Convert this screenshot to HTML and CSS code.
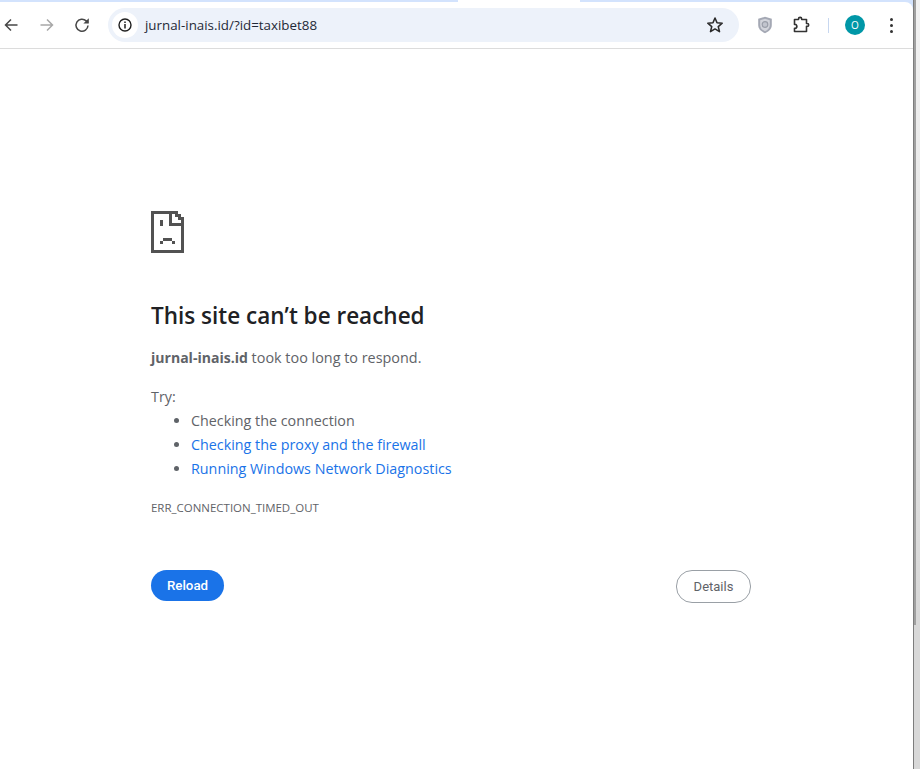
FILE: index.html
```html
<!DOCTYPE html>
<html lang="en">
<head>
<meta charset="utf-8">
<title>jurnal-inais.id</title>
<link rel="stylesheet" href="styles.css">
</head>
<body>
<div class="window">
  <div class="tabstrip"><span class="strip-left"></span><span class="tab-gap"></span><span class="strip-right"></span></div>
  <header class="toolbar">
    <div class="nav">
      <svg class="ico" viewBox="0 0 16 16"><path d="M14.500 8H2.500M8 2.500L2.500 8 8 13.500" fill="none" stroke="#474747" stroke-width="1.500"/></svg>
      <svg class="ico" viewBox="0 0 16 16"><path d="M1.500 8H13.500M8 2.500L13.500 8 8 13.500" fill="none" stroke="#a8a8a8" stroke-width="1.500"/></svg>
      <svg class="ico" viewBox="0 0 16 16"><path d="M14 8.500a6 6 0 1 1-1.800-4.600L14 5.600" fill="none" stroke="#474747" stroke-width="1.500"/><path d="M14.800 1.200v5.400H9.400z" fill="#474747"/></svg>
    </div>
    <div class="omnibox">
      <span class="site-chip"><svg class="info" viewBox="0 0 16 16"><circle cx="8" cy="8" r="6" fill="none" stroke="#1f1f1f" stroke-width="1.400"/><path d="M8 7v4.400M8 4.400v1.500" stroke="#1f1f1f" stroke-width="1.500"/></svg></span>
      <span class="url">jurnal-inais.id/?id=taxibet88</span>
      <svg class="star" viewBox="0 0 16 16"><path d="M8 1.800l1.800 4.200 4.600.4-3.500 3 1.100 4.500L8 11.500l-4 2.400 1.100-4.500-3.500-3 4.600-.4z" fill="none" stroke="#2a2a2a" stroke-width="1.400" stroke-linejoin="round"/></svg>
    </div>
    <div class="actions">
      <svg class="shield" viewBox="0 0 16 18"><path d="M8 .8l6.800 2v6.200c0 4-3 6.600-6.800 8.200C4.200 15.600 1.200 13 1.200 9V2.800z" fill="#a4a8b4"/><path d="M8 2.800l4.800 1.400v4.800c0 3-2 5-4.800 6.200-2.800-1.200-4.800-3.200-4.800-6.200V4.200z" fill="#d2d4db"/><circle cx="8" cy="8.500" r="2.800" fill="#c2c5ce" stroke="#9a9ea9" stroke-width="1.200"/></svg>
      <svg class="puzzle" viewBox="0 0 18 18"><path d="M2.500 3.500H6.500V3a1.600 1.600 0 0 1 3.200 0V3.500H14.500V7.500H15.300a1.300 1.300 0 0 1 0 2.800H14.500V15.500H2.500V12.300H4a2.800 2.800 0 0 0 0-3.800H2.500Z" fill="none" stroke="#333" stroke-width="1.600" stroke-linejoin="round"/></svg>
      <span class="divider"></span>
      <span class="avatar">O</span>
      <span class="kebab"><i></i><i></i><i></i></span>
    </div>
  </header>
  <main class="page">
    <div class="content">
      <svg class="sad" viewBox="0 0 33 42" shape-rendering="crispEdges"><path d="M0 0H27V3H30V6H33V42H0ZM3 3V39H30V15H18V3ZM21 3V12H30V9H27V6H24V3Z" fill="#525252" fill-rule="evenodd"/><path d="M9 9h3v6H9zM12 27h9v3h-9zM9 30h3v3H9zM21 30h3v3h-3z" fill="#525252"/></svg>
      <h1>This site can’t be reached</h1>
      <p class="summary"><strong>jurnal-inais.id</strong> took too long to respond.</p>
      <p class="try">Try:</p>
      <ul>
        <li>Checking the connection</li>
        <li><a href="#">Checking the proxy and the firewall</a></li>
        <li><a href="#">Running Windows Network Diagnostics</a></li>
      </ul>
      <p class="code">ERR_CONNECTION_TIMED_OUT</p>
      <div class="buttons">
        <button class="reload">Reload</button>
        <button class="details">Details</button>
      </div>
    </div>
  </main>
</div>
<div class="gutter"></div>
</body>
</html>
```
FILE: styles.css
```css
* { box-sizing: border-box; }
html, body { margin: 0; height: 100%; }
body { background: #fff; overflow: hidden; font-family: "Open Sans", "Noto Sans", sans-serif; display: flex; }
.window { width: 914px; height: 100%; flex: none; display: flex; flex-direction: column; border-right: 1px solid #7d7d7d; background: #d3e3fd; }
.gutter { flex: 1; background: linear-gradient(to right, #a0a0a0 2px, transparent 2px) 0 0 / 100% 625px no-repeat, linear-gradient(#f2f2f2, #d8d8d8 80%); }
.tabstrip { height: 2px; flex: none; display: flex; }
.strip-left { width: 458px; border-bottom-right-radius: 4px; }
.tab-gap { width: 122px; background: #fff; }
.strip-right { flex: 1; border-bottom-left-radius: 4px; }
.toolbar { height: 47px; flex: none; display: flex; align-items: center; background: #fff; border-bottom: 1px solid #dcdcdc; border-top-right-radius: 8px; }
.nav { display: flex; align-items: center; gap: 19.500px; padding-left: 3px; width: 108px; flex: none; }
.ico { width: 16px; height: 16px; }
.omnibox { width: 631px; height: 34px; flex: none; border-radius: 17px; background: #edf2fa; display: flex; align-items: center; padding: 0 15px 0 4px; }
.site-chip { width: 26px; height: 26px; border-radius: 50%; background: #fff; display: flex; align-items: center; justify-content: center; flex: none; }
.info { width: 16px; height: 16px; }
.url { margin-left: 7px; flex: 1; font-size: 13.350px; color: #1f2937; }
.star { width: 18px; height: 18px; }
.actions { display: flex; align-items: center; flex: 1; padding-left: 18px; }
.shield { width: 16px; height: 18px; }
.puzzle { width: 18px; height: 18px; margin-left: 19px; }
.divider { width: 1px; height: 15px; background: #c7d7f0; margin-left: 18px; }
.avatar { width: 20px; height: 20px; border-radius: 50%; background: #0097a7; color: #fff; font-size: 10px; display: flex; align-items: center; justify-content: center; margin-left: 16px; }
.kebab { display: flex; flex-direction: column; gap: 3px; margin-left: 25px; }
.kebab i { width: 3px; height: 3px; border-radius: 50%; background: #333; }
.page { flex: 1; background: #fff; }
.content { width: 600px; margin-left: 151px; padding-top: 162px; color: #5f6368; font-size: 14.320px; }
.sad { display: block; width: 33px; height: 42px; }
h1 { margin: 47px 0 0; font-size: 22.500px; line-height: 32px; font-weight: 600; color: #202124; }
.summary { margin: 16px 0 0; line-height: 20px; font-size: 14.400px; }
.summary strong { font-weight: 700; font-size: 14.050px; }
.try { margin: 19px 0 0; line-height: 20px; }
ul { margin: 2px 0 0; padding: 0 0 0 40px; }
li { line-height: 24px; }
a { color: #1a73e8; text-decoration: none; }
.code { margin: 19px 0 0; font-size: 11.480px; line-height: 16px; }
.buttons { display: flex; justify-content: space-between; align-items: flex-start; margin-top: 54px; }
button { font-family: Roboto, "Liberation Sans", sans-serif; font-size: 13.300px; border-radius: 16px; padding: 0 0 1px; }
.reload { width: 73px; height: 31px; background: #1a73e8; color: #fff; border: none; font-weight: 500; }
.details { width: 75px; height: 33px; background: #fff; color: #5f6368; border: 1px solid #9aa0a6; font-size: 13px; }
```
